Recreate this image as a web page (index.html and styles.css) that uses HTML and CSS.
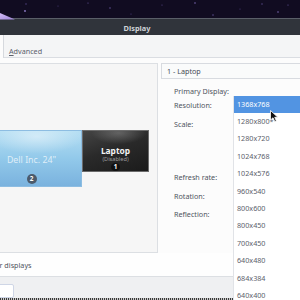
FILE: index.html
```html
<!DOCTYPE html>
<html lang="en">
<head>
  <meta charset="UTF-8" />
  <title>Display</title>
  <link rel="stylesheet" href="styles.css">
</head>
<body>

<svg class="wallpaper" width="300" height="20" viewBox="0 0 300 20">
  <circle cx="26" cy="4" r="0.7" fill="#5a4a8a" />
  <circle cx="25" cy="11" r="0.9" fill="#8f7cc8" />
  <circle cx="58" cy="6" r="0.6" fill="#4b3d78" />
  <circle cx="88" cy="3" r="0.6" fill="#6a5aa0" />
  <circle cx="110" cy="8" r="0.8" fill="#5e4f90" />
  <circle cx="131" cy="14" r="0.6" fill="#4e4080" />
  <circle cx="162" cy="5" r="0.6" fill="#5a4a8a" />
  <circle cx="195" cy="3" r="0.8" fill="#7a68b0" />
  <circle cx="213" cy="15" r="0.7" fill="#6a5aa0" />
  <circle cx="240" cy="9" r="0.6" fill="#4b3d78" />
  <circle cx="262" cy="4" r="0.7" fill="#5e4f90" />
  <circle cx="278" cy="12" r="0.8" fill="#7a68b0" />
  <circle cx="288" cy="5" r="0.6" fill="#6a5aa0" />
</svg>

<svg class="wedge" width="16" height="8" viewBox="0 0 16 8">
  <defs>
    <linearGradient id="wedgeFill" x1="0" y1="0" x2="1" y2="1">
      <stop offset="0" stop-color="#d2bdf5" />
      <stop offset="1" stop-color="#9c82d6" />
    </linearGradient>
  </defs>
  <polygon points="0,0 15,6.5 0,6.5" fill="url(#wedgeFill)" />
</svg>

<div class="window">
  <div class="titlebar">Display</div>

  <div class="tabs">
    <div class="tab active">General</div>
    <div class="tab"><u>A</u>dvanced</div>
  </div>

  <div class="page">
    <div class="page-body">
      <div class="monitors">
        <div class="screen dell">
          <span class="screen-name">Dell Inc. 24"</span>
          <span class="badge">2</span>
        </div>
        <div class="screen laptop">
          <span class="screen-name">Laptop</span>
          <span class="screen-state">(Disabled)</span>
          <span class="badge">1</span>
        </div>
      </div>

      <div class="props">
        <div class="props-head">1 - Laptop</div>
        <div class="prop row-primary">Primary Display:</div>
        <div class="prop row-resolution">Resolution:</div>
        <div class="prop row-scale">Scale:</div>
        <div class="prop row-refresh">Refresh rate:</div>
        <div class="prop row-rotation">Rotation:</div>
        <div class="prop row-reflection">Reflection:</div>
      </div>
    </div>

    <div class="mirror">
      <span class="check"></span>
      <span>Mirror displays</span>
    </div>
  </div>

  <div class="actions">
    <button class="btn"></button>
  </div>
  <div class="dither"></div>
</div>

<ul class="menu">
  <li class="selected">1368x768</li>
  <li>1280x800*</li>
  <li>1280x720</li>
  <li>1024x768</li>
  <li>1024x576</li>
  <li>960x540</li>
  <li>800x600</li>
  <li>800x450</li>
  <li>700x450</li>
  <li>640x480</li>
  <li>684x384</li>
  <li>640x400</li>
</ul>

<svg class="cursor" width="9" height="13" viewBox="0 0 9 13">
  <path d="M0.5 0.5 L0.5 10 L3 7.8 L4.8 11.6 L6.4 10.9 L4.7 7.3 L7.8 7.3 Z" fill="#111" stroke="#fff" stroke-width="0.8" />
</svg>

</body>
</html>
```

FILE: styles.css
```css
body {
  margin: 0;
  width: 300px;
  height: 300px;
  overflow: hidden;
  position: relative;
  background: #110c21;
  font-family: "Noto Sans", sans-serif;
}

.wallpaper {
  position: absolute;
  top: 0;
  left: 0;
}

.wedge {
  position: absolute;
  top: 13px;
  left: 0;
  z-index: 2;
}

/* window on the desktop, its left part is off screen */
.window {
  position: absolute;
  left: -100px;
  top: 18px;
  width: 400px;
  height: 282px;
  display: flex;
  flex-direction: column;
  background: #fcfcfc;
}

.titlebar {
  height: 16px;
  padding-left: 74px;
  border-top: 1px solid #5a5f68;
  background: #30343b;
  color: #cfd3d8;
  font-size: 7.4px;
  font-weight: bold;
  line-height: 18px;
  text-align: center;
}

.tabs {
  height: 22px;
  display: flex;
  padding-left: 40px;
  background: #f4f5f6;
  border-bottom: 1px solid #dadde2;
}

.tab {
  font-size: 7.2px;
  line-height: 10px;
  padding: 11px 5px 0;
  color: #5c616c;
}

.tab.active {
  width: 52px;
  margin-bottom: -1px;
  background: #fcfcfc;
  border-left: 1px solid #d6d9de;
  border-right: 1px solid #d6d9de;
}

.page {
  height: 219px;
}

.page-body {
  display: flex;
  gap: 3px;
  padding-top: 5px;
  height: 190px;
}

.monitors {
  width: 258px;
  box-sizing: border-box;
  border: 1px solid #dcdfe3;
  background: #f6f6f6;
  position: relative;
}

.screen {
  position: absolute;
  top: 66px;
  box-sizing: border-box;
  display: flex;
  flex-direction: column;
  align-items: center;
}

.dell {
  left: 80px;
  width: 101px;
  height: 57px;
  padding-top: 23px;
  border: 1px solid #8dbde2;
  background:
    radial-gradient(ellipse 70% 45% at 55% 10%, rgba(255, 255, 255, 0.45), rgba(255, 255, 255, 0) 70%),
    linear-gradient(180deg, #b4def3 0%, #92c9ea 50%, #7ab2de 100%);
}

.dell .screen-name {
  font-size: 8.8px;
  line-height: 12px;
  color: rgba(255, 255, 255, 0.72);
}

.laptop {
  left: 181px;
  width: 67px;
  height: 42px;
  padding-top: 15px;
  border: 1px solid #6b6b6b;
  background:
    radial-gradient(ellipse 60% 40% at 55% 5%, rgba(255, 255, 255, 0.22), rgba(255, 255, 255, 0) 70%),
    linear-gradient(160deg, #444 0%, #2a2a2a 45%, #1b1b1b 100%);
}

.laptop .screen-name {
  font-size: 8.4px;
  font-weight: bold;
  line-height: 10px;
  color: #f2f2f2;
}

.screen-state {
  font-size: 5.6px;
  line-height: 7px;
  color: #9c9c9c;
}

.badge {
  position: absolute;
  left: 50%;
  width: 10px;
  height: 10px;
  margin-left: -5px;
  border-radius: 50%;
  font-size: 6.4px;
  font-weight: bold;
  line-height: 10px;
  text-align: center;
  color: #fff;
}

.dell .badge {
  bottom: 2px;
  background: #4b5a6b;
}

.laptop .badge {
  bottom: 0;
  width: 9px;
  height: 8px;
  margin-left: -4.5px;
  line-height: 8px;
  background: #111;
}

.props {
  flex: 1;
  font-size: 7.2px;
  color: #4f5460;
}

.props-head {
  height: 14px;
  line-height: 15px;
  padding-left: 5px;
  border: 1px solid #d8dbe0;
  border-right: none;
  background: #fafbfb;
  color: #454a55;
}

.prop {
  padding-left: 13px;
  display: flex;
  align-items: center;
}

.row-primary { height: 14px; margin-top: 5px; }
.row-resolution { height: 14px; }
.row-scale { height: 24px; margin-bottom: 31px; }
.row-refresh { height: 20px; }
.row-rotation { height: 18px; }
.row-reflection { height: 18px; }

.mirror {
  height: 23px;
  display: flex;
  align-items: center;
  gap: 4px;
  padding-left: 68px;
  border-bottom: 1px solid #dcdfe3;
  background: #fefefe;
  font-size: 7.2px;
  color: #4f5460;
}

.check {
  width: 9px;
  height: 9px;
  box-sizing: border-box;
  border: 1px solid #cfd6e6;
  border-radius: 2px;
  background: #fff;
}

.actions {
  height: 21px;
  box-sizing: border-box;
  padding: 7px 0 0 54px;
  background: #eff0f2;
}

.btn {
  display: block;
  width: 60px;
  height: 14px;
  border: 1px solid #cfd6e6;
  border-radius: 2px;
  background: #fff;
}

.dither {
  height: 2px;
  background:
    repeating-linear-gradient(90deg, #3a3a3a 0 1px, #c8c8c8 1px 2px);
}

/* opened resolution combo */
.menu {
  position: absolute;
  left: 233px;
  top: 95.6px;
  width: 67px;
  margin: 0;
  padding: 0;
  list-style: none;
  background: #fff;
  border-left: 1px solid #e1e3e7;
  font-size: 7.2px;
  color: #5c616c;
}

.menu li {
  height: 17.4px;
  line-height: 17.4px;
  padding-left: 3px;
}

.menu li.selected {
  background: #5294e2;
  color: #fff;
}

.cursor {
  position: absolute;
  left: 270px;
  top: 110px;
}
```
